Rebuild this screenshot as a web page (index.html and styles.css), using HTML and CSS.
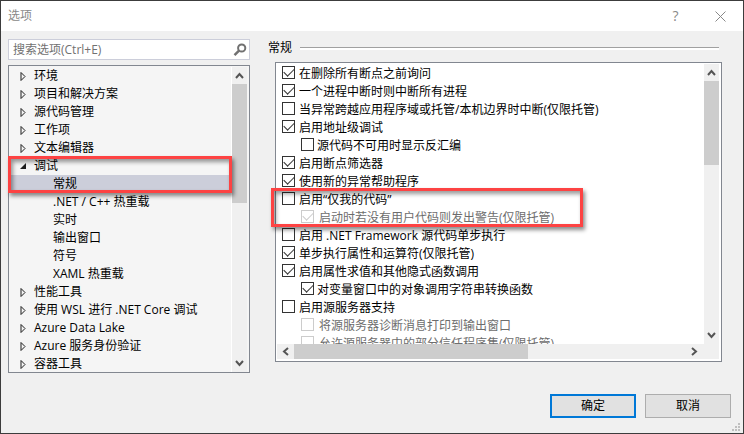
FILE: index.html
```html
<!DOCTYPE html>
<html lang="zh-CN">
<head>
	<meta charset="utf-8">
	<title>选项</title>
	<link rel="stylesheet" href="styles.css">
</head>
<body>
<svg class="defs" aria-hidden="true">
	<symbol id="closed" viewBox="0 0 6 11"><path d="M1 1.5V9.5L5 5.5Z" fill="none" stroke="#1e1e1e"/></symbol>
	<symbol id="open" viewBox="0 0 6 6"><path d="M6 0V6H0Z" fill="#1e1e1e"/></symbol>
	<symbol id="up" viewBox="0 0 9 7"><path d="M1 6L4.5 2L8 6" fill="none" stroke="#555" stroke-width="2"/></symbol>
</svg>
<form class="dialog">
	<header class="titlebar">
		<h1>选项</h1>
		<button type="button" class="help" aria-label="帮助">?</button>
		<button type="button" class="close" aria-label="关闭"><svg width="11" height="11" viewBox="0 0 11 11"><path d="M.5.5L10.500 10.5M10.5.5L.5 10.5" stroke="#888" fill="none"/></svg></button>
	</header>

	<main class="content">
		<section class="nav">
			<div class="search">
				<input type="text" placeholder="搜索选项(Ctrl+E)" aria-label="搜索选项">
				<button type="button" aria-label="搜索"><svg width="14" height="14" viewBox="0 0 14 14"><circle cx="8.700" cy="5" r="3.600" fill="none" stroke="#717171" stroke-width="2"/><path d="M6 7.700L1.500 12.200" stroke="#717171" stroke-width="2.500"/></svg></button>
			</div>
			<div class="tree">
				<ul class="items">
					<li><button type="button"><svg class="closed"><use href="#closed"/></svg>环境</button></li>
					<li><button type="button"><svg class="closed"><use href="#closed"/></svg>项目和解决方案</button></li>
					<li><button type="button"><svg class="closed"><use href="#closed"/></svg>源代码管理</button></li>
					<li><button type="button"><svg class="closed"><use href="#closed"/></svg>工作项</button></li>
					<li><button type="button"><svg class="closed"><use href="#closed"/></svg>文本编辑器</button></li>
					<li><button type="button"><svg class="open"><use href="#open"/></svg>调试</button>
						<ul>
							<li><button type="button" class="selected">常规</button></li>
							<li><button type="button">.NET / C++ 热重载</button></li>
							<li><button type="button">实时</button></li>
							<li><button type="button">输出窗口</button></li>
							<li><button type="button">符号</button></li>
							<li><button type="button">XAML 热重载</button></li>
						</ul>
					</li>
					<li><button type="button"><svg class="closed"><use href="#closed"/></svg>性能工具</button></li>
					<li><button type="button"><svg class="closed"><use href="#closed"/></svg>使用 WSL 进行 .NET Core 调试</button></li>
					<li><button type="button"><svg class="closed"><use href="#closed"/></svg>Azure Data Lake</button></li>
					<li><button type="button"><svg class="closed"><use href="#closed"/></svg>Azure 服务身份验证</button></li>
					<li><button type="button"><svg class="closed"><use href="#closed"/></svg>容器工具</button></li>
				</ul>
				<div class="vbar">
					<svg class="arrow"><use href="#up"/></svg>
					<div class="thumb tree-thumb"></div>
					<svg class="arrow down"><use href="#up"/></svg>
				</div>
			</div>
			<div class="mark mark-nav"></div>
		</section>

		<section class="page">
			<h2>常规</h2>
			<div class="list">
				<div class="options">
					<label><input type="checkbox" checked>在删除所有断点之前询问</label>
					<label><input type="checkbox" checked>一个进程中断时则中断所有进程</label>
					<label><input type="checkbox">当异常跨越应用程序域或托管/本机边界时中断(仅限托管)</label>
					<label><input type="checkbox" checked>启用地址级调试</label>
					<label class="sub"><input type="checkbox">源代码不可用时显示反汇编</label>
					<label><input type="checkbox" checked>启用断点筛选器</label>
					<label><input type="checkbox" checked>使用新的异常帮助程序</label>
					<label><input type="checkbox">启用“仅我的代码”</label>
					<label class="sub off"><input type="checkbox" checked disabled>启动时若没有用户代码则发出警告(仅限托管)</label>
					<label><input type="checkbox">启用 .NET Framework 源代码单步执行</label>
					<label><input type="checkbox" checked>单步执行属性和运算符(仅限托管)</label>
					<label><input type="checkbox" checked>启用属性求值和其他隐式函数调用</label>
					<label class="sub"><input type="checkbox" checked>对变量窗口中的对象调用字符串转换函数</label>
					<label><input type="checkbox">启用源服务器支持</label>
					<label class="sub off"><input type="checkbox" disabled>将源服务器诊断消息打印到输出窗口</label>
					<label class="sub off"><input type="checkbox" disabled>允许源服务器中的部分信任程序集(仅限托管)</label>
				</div>
				<div class="vbar">
					<svg class="arrow"><use href="#up"/></svg>
					<div class="thumb list-thumb"></div>
					<svg class="arrow down"><use href="#up"/></svg>
				</div>
				<div class="hbar">
					<svg class="arrow left"><use href="#up"/></svg>
					<div class="thumb"></div>
					<svg class="arrow right"><use href="#up"/></svg>
				</div>
			</div>
			<div class="mark mark-page"></div>
		</section>
	</main>

	<footer class="buttons">
		<button type="submit" class="primary">确定</button>
		<button type="button">取消</button>
		<svg class="grip" width="8" height="8" viewBox="0 0 8 8"><path d="M6 0h2v2H6zM3 3h2v2H3zM6 3h2v2H6zM0 6h2v2H0zM3 6h2v2H3zM6 6h2v2H6z" fill="#bfbfbf"/></svg>
	</footer>
</form>
</body>
</html>
```

FILE: styles.css
```css
* {
	box-sizing: border-box;
}

body {
	margin: 0;
	font: 12px/18px "Open Sans", "Noto Sans CJK SC", sans-serif;
	color: #000;
}

ul {
	list-style: none;
	margin: 0;
	padding: 0;
}

button, input {
	font: inherit;
	color: inherit;
	margin: 0;
}

.defs {
	position: absolute;
	width: 0;
	height: 0;
}

.dialog {
	display: flex;
	flex-direction: column;
	height: 100vh;
	border: 1px solid #3c3c3c;
	background: #f0f0f0;
}

/* title bar */
.titlebar {
	display: flex;
	align-items: center;
	height: 30px;
	padding: 0 7px;
	background: #fff;
	color: #888;
}

.titlebar h1 {
	flex: 1;
	margin: 0;
	font-size: 12px;
	font-weight: normal;
}

.titlebar button {
	display: flex;
	align-items: center;
	justify-content: center;
	width: 45px;
	height: 30px;
	padding: 0;
	border: 0;
	background: none;
}

.titlebar .help {
	font-size: 14px;
}

.titlebar .close {
	margin-right: -7px;
}

.content {
	flex: 1;
	display: grid;
	grid-template-columns: 242px 1fr;
	gap: 18px;
	min-height: 0;
	padding: 8px 21px 0 7px;
}

.nav, .page {
	position: relative;
	display: flex;
	flex-direction: column;
	min-height: 0;
	min-width: 0;
}

.search {
	display: flex;
	align-items: center;
	height: 21px;
	margin-bottom: 5px;
	border: 1px solid #ccceda;
	background: #fff;
}

.search input {
	flex: 1;
	min-width: 0;
	padding: 0 4px;
	border: 0;
	background: none;
	outline: none;
}

.search input::placeholder {
	color: #717171;
}

.search button {
	display: flex;
	padding: 0 2px;
	border: 0;
	background: none;
}

/* tree on the left */
.tree {
	flex: 1;
	display: flex;
	min-height: 0;
	padding: 1px 2px 0;
	border: 1px solid #828790;
	background: #f5f5f5;
	overflow: hidden;
}

.items {
	flex: 1;
}

.items button {
	display: flex;
	align-items: center;
	width: 100%;
	height: 18px;
	padding: 0 0 0 23px;
	border: 0;
	background: none;
	text-align: left;
	white-space: nowrap;
}

.items svg {
	width: 6px;
	height: 11px;
	margin: 0 8px 0 -14px;
}

.items svg.open {
	height: 6px;
}

.items ul button {
	padding-left: 42px;
}

.items .selected {
	background: #ccceda;
}

/* scroll bars */
.vbar {
	display: flex;
	flex-direction: column;
	width: 16px;
	border-left: 1px solid #fff;
	background: #f0f0f0;
}

.hbar {
	display: flex;
	height: 15px;
	background: #f0f0f0;
}

.thumb {
	background: #cdcdcd;
}

.arrow {
	width: 9px;
	height: 7px;
	margin: 5px 3px;
	flex: none;
}

.down {
	margin-top: auto;
	transform: rotate(180deg);
}

.left {
	margin: 4px;
	transform: rotate(-90deg);
}

.right {
	margin: 4px 20px 4px auto;
	transform: rotate(90deg);
}

.tree-thumb {
	height: 39%;
}

.list-thumb {
	height: 30%;
}

.hbar .thumb {
	width: 53%;
}

/* options page */
.page h2 {
	display: flex;
	align-items: center;
	gap: 8px;
	height: 18px;
	margin: 0 3px 5px 0;
	font-size: 12px;
	font-weight: normal;
}

.page h2::after {
	content: "";
	flex: 1;
	height: 2px;
	border-top: 1px solid #a0a0a0;
	background: #fff;
}

.list {
	flex: 1;
	display: grid;
	grid-template-columns: 1fr 16px;
	grid-template-rows: 1fr 15px;
	min-height: 0;
	margin: 0 0 11px 7px;
	padding: 1px 2px 2px 1px;
	border: 1px solid #828790;
	background: #fff;
}

.list .hbar {
	grid-column: 1 / 3;
}

.options {
	min-height: 0;
	padding-left: 5px;
	overflow: hidden;
}

.options label {
	display: flex;
	align-items: flex-start;
	gap: 4px;
	height: 18px;
	line-height: 20px;
	white-space: nowrap;
}

.options .sub {
	padding-left: 19px;
	gap: 3px;
}

.options .off {
	gap: 5px;
	color: #6d6d6d;
}

.options input {
	appearance: none;
	position: relative;
	flex: none;
	width: 13px;
	height: 13px;
	margin-top: 2px;
	border: 1px solid #333;
	background: #fff;
}

.options input:checked::after {
	content: "";
	position: absolute;
	left: 3px;
	top: -1px;
	width: 5px;
	height: 9px;
	border: solid #333;
	border-width: 0 1px 1px 0;
	transform: rotate(45deg);
}

.options input:disabled,
.options input:disabled::after {
	border-color: #ccc;
}

/* red frames */
.mark {
	position: absolute;
	border: 3px solid #fd4343;
	box-shadow: 2px 3px 4px rgba(0, 0, 0, .45), inset 2px 3px 4px rgba(0, 0, 0, .4);
	pointer-events: none;
}

.mark-nav {
	top: 117px;
	left: 0;
	width: 224px;
	height: 37px;
}

.mark-page {
	top: 149px;
	left: 3px;
	width: 312px;
	height: 39px;
}

.buttons {
	position: relative;
	display: flex;
	justify-content: flex-end;
	gap: 9px;
	padding: 21px 12px 15px;
}

.buttons button {
	width: 86px;
	height: 24px;
	padding: 0;
	border: 1px solid #adadad;
	background: #e1e1e1;
}

.buttons .primary {
	border: 2px solid #0078d7;
}

.grip {
	position: absolute;
	right: 3px;
	bottom: 2px;
}
```
